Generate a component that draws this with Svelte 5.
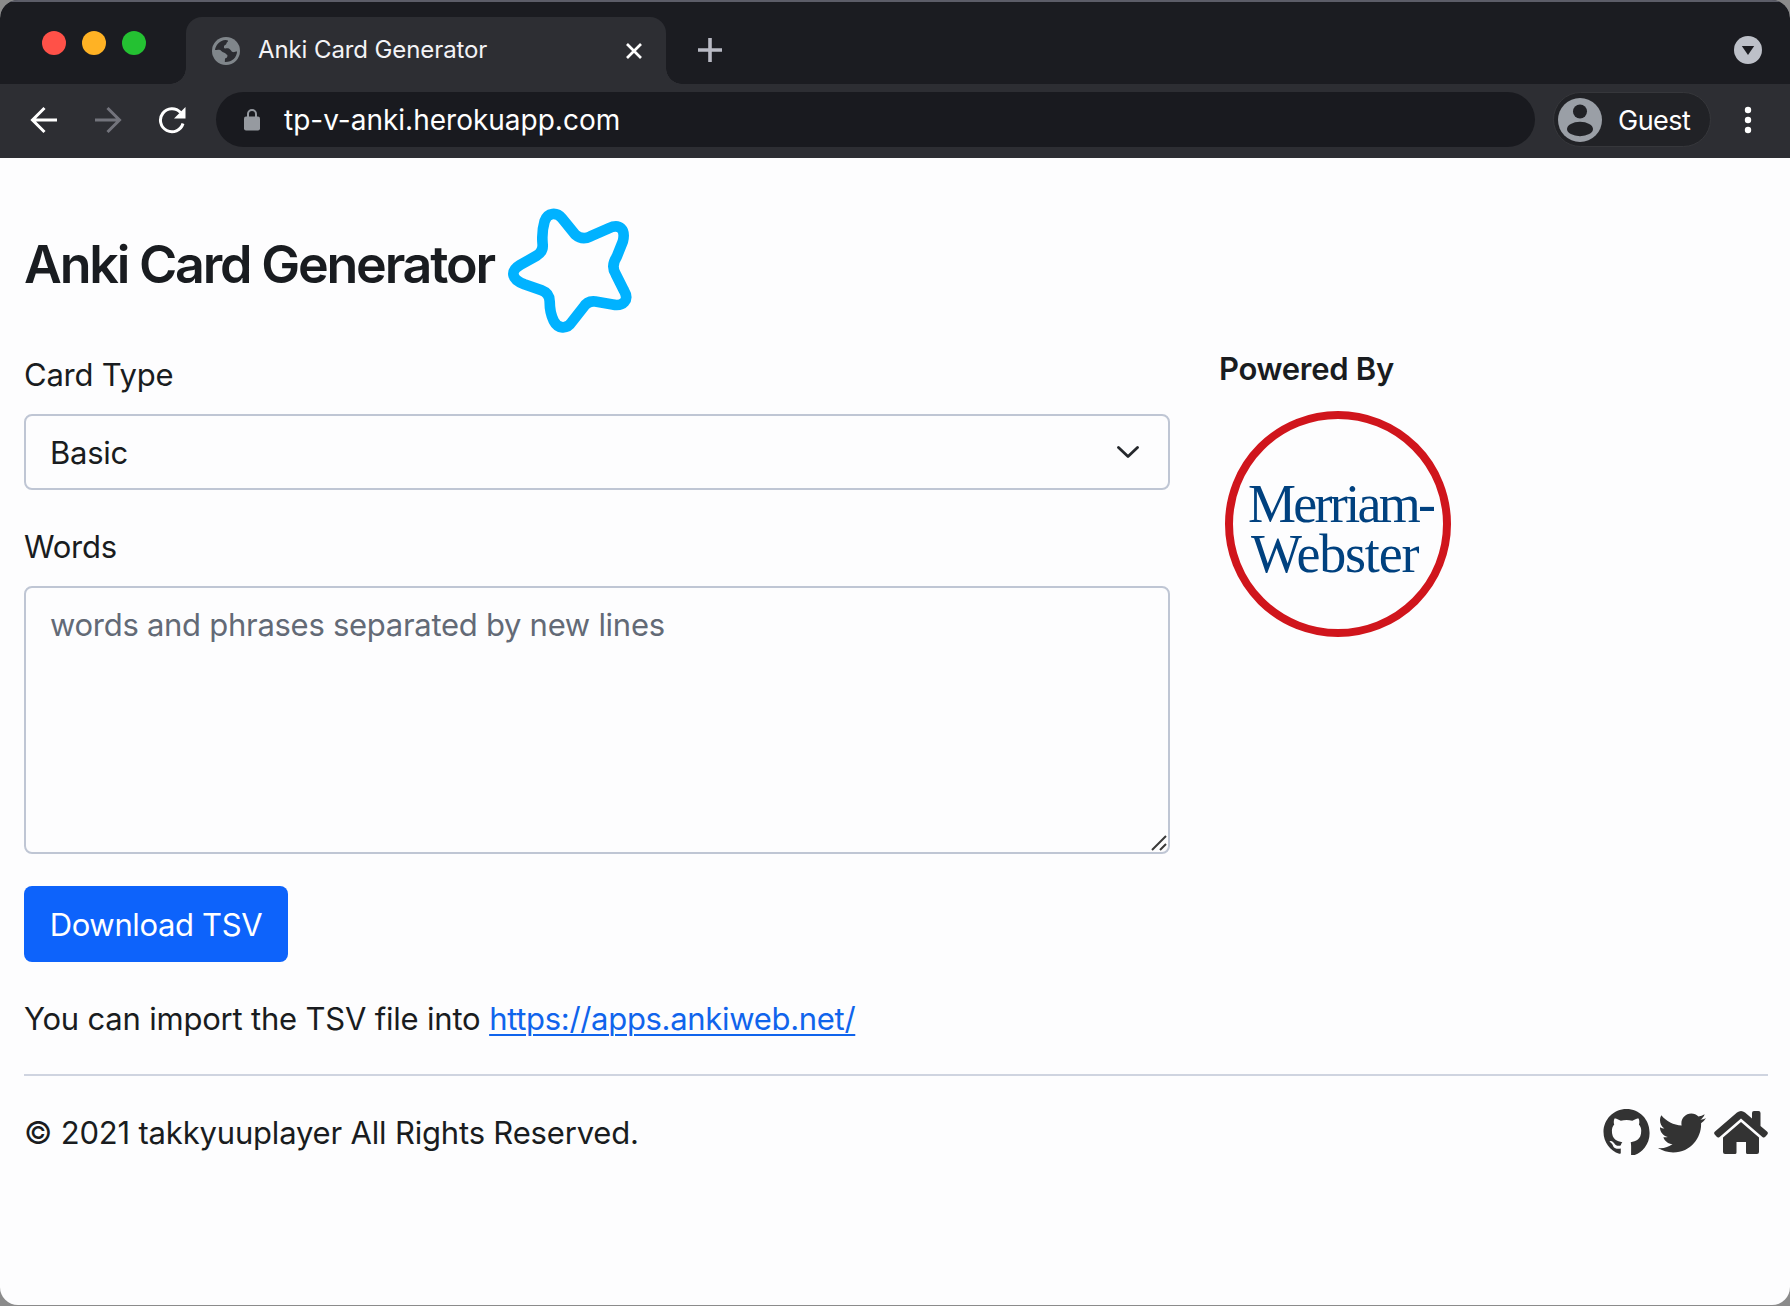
<script>
  const cardTypes = ['Basic'];
  let cardType = $state('Basic');
  let words = $state('');
</script>

<div class="desktop">
  <div class="window">
    <header>
      <div class="tabstrip">
        <div class="lights"><i class="red"></i><i class="amber"></i><i class="green"></i></div>
        <div class="tab">
          <svg class="globe" viewBox="0 0 28 28" width="28" height="28">
            <circle cx="14" cy="14" r="14" fill="#80868b" />
            <path d="M3 13C3.500 8 8 3.500 13.500 3c2.500 0 3 .8 2.200 1.800-1.700 .9-.8 2.500-2.400 3.200-1.800 .5-1.300 2-1.200 3.300 2 .3 3.500-.4 5.500 .6 1.600 1 1.700 2.900 3.400 3.200 1.600 .2 2.700-.7 4.100-.6-.3 6-5.200 10.800-12.300 10.500l.2-3.500c2.300-.2 2.500-1.800 2.400-3.400-1.400-.5-1.700-1.900-3.100-2.300-2.700-.7-3.400-3-5.300-3-1.700-.2-2.700 .2-4 .2z" fill="#2b2c31" />
          </svg>
          <span class="tabtitle">Anki Card Generator</span>
          <svg class="close" viewBox="0 0 18 18" width="18" height="18"><path d="M2 2l14 14M16 2L2 16" stroke="#fff" stroke-width="2.700" /></svg>
        </div>
        <svg class="plus" viewBox="0 0 26 26" width="26" height="26"><path d="M13 1v24M1 13h24" stroke="#b9bac4" stroke-width="3.600" /></svg>
        <svg class="drop" viewBox="0 0 28 28" width="28" height="28"><circle cx="14" cy="14" r="14" fill="#bdc0c8" /><path d="M7.800 10h12.400L14 19z" fill="#1b1c21" /></svg>
      </div>
      <div class="toolbar">
        <svg class="back" viewBox="0 0 28 28" width="28" height="28"><path d="M27 14H3M14.500 2L2.500 14l12 12" fill="none" stroke="#fff" stroke-width="3" /></svg>
        <svg class="fwd" viewBox="0 0 28 28" width="28" height="28"><path d="M1 14h24M13.500 2l12 12-12 12" fill="none" stroke="#73747c" stroke-width="3" /></svg>
        <svg class="reload" viewBox="0 0 28 28" width="28" height="28"><path d="M25 17.500A11.500 11.500 0 1 1 22.500 6.500" fill="none" stroke="#fff" stroke-width="3" /><path d="M27.500 1v11.500H16z" fill="#fff" /></svg>
        <div class="address">
          <svg viewBox="0 0 16 22" width="16" height="22"><path d="M4 9V5a4 4 0 0 1 8 0v4" fill="none" stroke="#969aa0" stroke-width="2" /><rect y="7.500" width="16" height="14" rx="2" fill="#969aa0" /></svg>
          <span>tp-v-anki.herokuapp.com</span>
        </div>
        <div class="guest">
          <svg viewBox="0 0 44 44" width="44" height="44"><circle cx="22" cy="22" r="22" fill="#9a9fa6" /><circle cx="22" cy="13.500" r="7" fill="#212226" /><ellipse cx="22" cy="31" rx="13" ry="7.200" fill="#212226" /></svg>
          <span>Guest</span>
        </div>
        <svg class="dots" viewBox="0 0 8 28" width="8" height="28"><circle cx="4" cy="4" r="3.200" fill="#fff" /><circle cx="4" cy="14" r="3.200" fill="#fff" /><circle cx="4" cy="24" r="3.200" fill="#fff" /></svg>
      </div>
    </header>

    <main>
      <div class="heading">
        <h1>Anki Card Generator</h1>
        <svg viewBox="0 0 124 126" width="126" height="128">
          <path d="M37 14C40 5 49 5 54 11L67 27Q74 33 82 29L100 21C111 16 117 22 114 34L108 49Q102 58 107 66L115 82C121 92 114 98 104 96L87 93Q79 92 75 99L64 113C59 121 50 120 46 112Q42 104 42 93Q42 85 34 82L17 76C4 71 3 63 13 57L29 48Q36 44 35 36Q34 24 37 14Z" fill="none" stroke="#00b2ff" stroke-width="10.500" stroke-linejoin="round" />
        </svg>
      </div>
      <div class="columns">
        <form onsubmit={(e) => e.preventDefault()}>
          <label for="card-type" class="l1">Card Type</label>
          <div class="selectbox">
            <select id="card-type" bind:value={cardType}>
              {#each cardTypes as type}<option>{type}</option>{/each}
            </select>
            <svg viewBox="0 0 22 12" width="22" height="12"><path d="M1.500 1.500L11 10.500l9.500-9" fill="none" stroke="#25282c" stroke-width="2.800" stroke-linecap="round" stroke-linejoin="round" /></svg>
          </div>
          <label for="words" class="l2">Words</label>
          <div class="areabox">
            <textarea id="words" bind:value={words} placeholder="words and phrases separated by new lines"></textarea>
            <svg viewBox="0 0 16 16" width="16" height="16"><path d="M1 15L15 1M9 15l6-6" stroke="#3a3a3a" stroke-width="2" /></svg>
          </div>
          <button type="submit"><span>Download TSV</span></button>
        </form>
        <aside>
          <h2>Powered By</h2>
          <div class="mw"><span class="m1">Merriam-</span><span class="m2">Webster</span></div>
        </aside>
      </div>
      <p class="hint"><span class="lead">You can import the TSV file into</span> <a href="https://apps.ankiweb.net/">https://apps.ankiweb.net/</a></p>
      <footer>
        <span class="copy">© 2021 takkyuuplayer All Rights Reserved.</span>
        <nav>
          <svg viewBox="0 0 16 16" width="47" height="46"><path d="M8 0C3.580 0 0 3.580 0 8c0 3.540 2.290 6.530 5.470 7.590.4.070.55-.17.55-.38 0-.19-.01-.82-.01-1.490-2.010.37-2.530-.49-2.690-.94-.09-.23-.48-.94-.82-1.130-.28-.15-.68-.52-.01-.53.63-.01 1.080.58 1.230.82.72 1.210 1.870.87 2.330.66.070-.52.280-.87.510-1.070-1.780-.2-3.640-.89-3.640-3.950 0-.87.310-1.590.82-2.150-.08-.2-.36-1.020.08-2.120 0 0 .67-.21 2.200.82.640-.18 1.320-.27 2-.27s1.360.09 2 .27c1.530-1.040 2.200-.82 2.200-.82.440 1.100.16 1.920.08 2.120.51.560.82 1.270.82 2.150 0 3.070-1.870 3.750-3.650 3.950.1.500.14.930.14 1.480 0 1.070-.01 2.700-.01 3.350A8.010 8.010 0 0 0 16 8c0-4.420-3.580-8-8-8z" fill="#333" /></svg>
          <svg class="tw" viewBox="0 0 512 512" width="48" height="48"><path d="M459.370 151.716c.325 4.548.325 9.097.325 13.645 0 138.720-105.583 298.558-298.558 298.558-59.452 0-114.680-17.219-161.137-47.106 8.447.974 16.568 1.299 25.340 1.299 49.055 0 94.213-16.568 130.274-44.832-46.132-.975-84.792-31.188-98.112-72.772 6.498.974 12.995 1.624 19.818 1.624 9.421 0 18.843-1.300 27.614-3.573-48.081-9.747-84.143-51.980-84.143-102.985v-1.299c13.969 7.797 30.214 12.670 47.431 13.319-28.264-18.843-46.781-51.005-46.781-87.391 0-19.492 5.197-37.360 14.294-52.954 51.655 63.675 129.300 105.258 216.365 109.807-1.624-7.797-2.599-15.918-2.599-24.040 0-57.828 46.782-104.934 104.934-104.934 30.213 0 57.502 12.670 76.670 33.137 23.715-4.548 46.456-13.320 66.599-25.340-7.798 24.366-24.366 44.833-46.132 57.827 21.117-2.273 41.584-8.122 60.426-16.243-14.292 20.791-32.161 39.308-52.628 54.253z" fill="#333" /></svg>
          <svg class="home" viewBox="0 0 54 43" width="54" height="43"><path d="M27 0q2 0 4 1.500l7 6V2q0-2 2-2h4.500q2 0 2 2v13l6.500 5.500q1.600 1.400 .3 3l-2 2.300q-1.300 1.400-2.900 .1L27 7.500 5.600 25.900q-1.600 1.300-2.900-.1l-2-2.300q-1.300-1.600 .3-3L23 1.500Q25 0 27 0z" fill="#333" /><path d="M27 11l18 15.500V41q0 2-2 2H33.500q-1.500 0-1.500-1.500V31H22.500v10.500Q22.500 43 21 43H11q-2 0-2-2V26.500z" fill="#333" /></svg>
        </nav>
      </footer>
    </main>
  </div>
</div>

<style>
  :global(body) { margin: 0; background: #8b8b8b; }
  .desktop, .desktop * { box-sizing: border-box; }
  .desktop { width: 1790px; height: 1306px; font-family: Inter, "Liberation Sans", sans-serif; color: #191c20; }
  .window { height: 1305px; border-radius: 18px; overflow: hidden; background: #fdfdfe; }
  svg { display: block; flex: none; }
  .tabstrip { height: 84px; background: #1b1c21; border-top: 2px solid #5c5d68; display: flex; align-items: flex-start; }
  .lights { display: flex; gap: 16px; padding: 29px 0 0 42px; width: 186px; height: 82px; }
  .lights i { width: 24px; height: 24px; border-radius: 50%; }
  .red { background: #ff5148; }
  .amber { background: #ffb224; }
  .green { background: #24c132; }
  .tab { width: 480px; height: 67px; margin-top: 15px; background: #2d2e33; border-radius: 16px 16px 0 0; display: flex; align-items: center; padding: 0 23px 0 26px; position: relative; }
  .tab::before, .tab::after { content: ""; position: absolute; bottom: 0; width: 16px; height: 16px; }
  .tab::before { left: -16px; background: radial-gradient(circle at 0 0, transparent 15.500px, #2d2e33 16px); }
  .tab::after { right: -16px; background: radial-gradient(circle at 100% 0, transparent 15.500px, #2d2e33 16px); }
  .tabtitle { font-size: 24px; line-height: 30px; letter-spacing: -0.1px; color: #f3f3f6; margin-left: 18px; padding-bottom: 2px; flex: 1; white-space: nowrap; }
  .plus { margin: 35px auto 0 31px; }
  .drop { margin: 34px 28px 0 0; }
  .toolbar { height: 74px; background: #2d2e33; display: flex; align-items: center; padding: 0 38px 3px 30px; }
  .fwd { margin-left: 36px; }
  .reload { margin-left: 36px; }
  .address { width: 1319px; height: 55px; border-radius: 28px; background: #191a1f; margin-left: 30px; padding-left: 28px; display: flex; align-items: center; gap: 24px; color: #fff; font-size: 28px; }
  .address span { padding-top: 1px; }
  .guest span { padding-top: 2px; }
  .guest { width: 158px; height: 55px; margin-left: 18px; border-radius: 28px; background: #212226; border: 1px solid #36373b; display: flex; align-items: center; padding-left: 4px; gap: 16px; color: #fff; font-size: 27px; letter-spacing: -0.5px; }
  .dots { margin-left: 33px; }
  main { padding: 0 22px 0 24px; }
  .heading { display: flex; height: 176px; padding-top: 49px; gap: 11px; }
  h1 { margin: 30px 0 0; font-size: 52px; line-height: 56px; font-weight: 600; letter-spacing: -2.2px; width: 472px; white-space: nowrap; }
  .columns { display: flex; gap: 49px; }
  form { width: 1146px; }
  label { display: block; font-size: 31px; line-height: 48px; letter-spacing: -0.25px; }
  .l1 { padding-top: 17px; height: 80px; }
  .l2 { padding-top: 33px; height: 96px; }
  .selectbox, .areabox { position: relative; }
  select, textarea { display: block; appearance: none; width: 100%; border: 2px solid #bfc6d4; border-radius: 8px; background: transparent; font: inherit; font-size: 31px; color: #191c20; outline: 0; resize: none; margin: 0; letter-spacing: -0.28px; }
  select { height: 76px; padding: 0 24px; }
  .selectbox svg { position: absolute; right: 31px; top: 32px; }
  textarea { height: 268px; padding: 13px 24px; line-height: 48px; }
  textarea::placeholder { color: #636a76; opacity: 1; }
  .areabox svg { position: absolute; right: 3px; bottom: 3px; }
  button { display: block; margin-top: 32px; width: 264px; height: 76px; border: 0; border-radius: 8px; background: #0d63fb; color: #fff; font: inherit; font-size: 31px; letter-spacing: -0.35px; padding: 0; white-space: nowrap; }
  h2 { margin: 15px 0 0; font-size: 31px; line-height: 40px; font-weight: 600; letter-spacing: -0.3px; white-space: nowrap; }
  .mw { width: 226px; height: 226px; margin: 22px 0 0 6px; border: 8px solid #d0151c; border-radius: 50%; color: #00417f; font-family: "Liberation Serif", serif; font-size: 54px; line-height: 50px; padding-top: 60px; white-space: nowrap; }
  .mw span { display: block; }
  .m1 { margin-left: 15px; letter-spacing: -2.7px; }
  .m2 { margin-left: 18px; letter-spacing: -1.2px; }
  .hint { margin: 33px 0 31px; font-size: 31px; line-height: 48px; white-space: nowrap; }
  .lead { letter-spacing: -0.2px; }
  a { color: #1064ec; letter-spacing: -0.31px; text-underline-offset: 4px; text-decoration-thickness: 2px; }
  footer { border-top: 2px solid #cfd4e0; padding-top: 32px; display: flex; justify-content: space-between; font-size: 31px; line-height: 48px; white-space: nowrap; }
  .copy { letter-spacing: -0.18px; padding-top: 1px; }
  nav { display: flex; padding-top: 1px; }
  .tw { margin-left: 8px; }
  .home { margin: 2px 0 0 8px; }
</style>
